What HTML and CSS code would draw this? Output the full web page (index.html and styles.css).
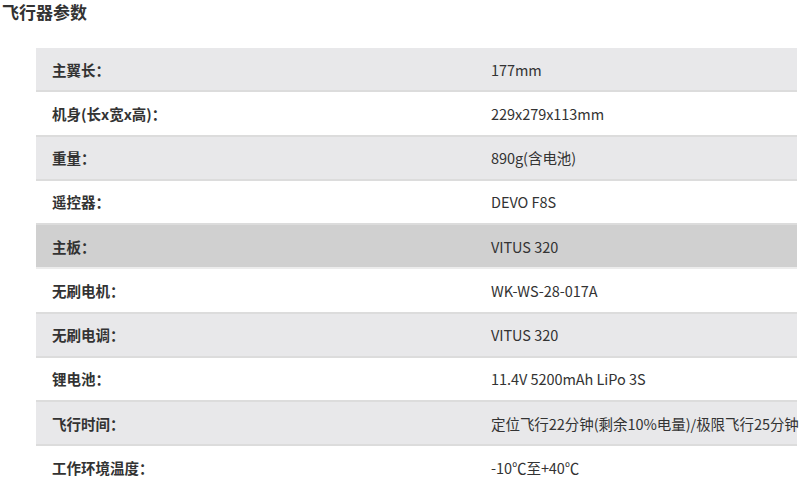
FILE: index.html
```html
<!DOCTYPE html>
<html lang="zh-CN">
<head>
<meta charset="utf-8">
<link rel="stylesheet" href="styles.css">
</head>
<body>
<h2 class="title">飞行器参数</h2>
<div class="spec">
  <div class="row alt"><div class="k">主翼长：</div><div class="v">177mm</div></div>
  <div class="row"><div class="k">机身(长x宽x高)：</div><div class="v">229x279x113mm</div></div>
  <div class="row alt"><div class="k">重量：</div><div class="v">890g(含电池)</div></div>
  <div class="row"><div class="k">遥控器：</div><div class="v">DEVO F8S</div></div>
  <div class="row hover"><div class="k">主板：</div><div class="v">VITUS 320</div></div>
  <div class="row"><div class="k">无刷电机：</div><div class="v">WK-WS-28-017A</div></div>
  <div class="row alt"><div class="k">无刷电调：</div><div class="v">VITUS 320</div></div>
  <div class="row"><div class="k">锂电池：</div><div class="v">11.4V 5200mAh LiPo 3S</div></div>
  <div class="row alt"><div class="k">飞行时间：</div><div class="v">定位飞行22分钟(剩余10%电量)/极限飞行25分钟</div></div>
  <div class="row last"><div class="k">工作环境温度：</div><div class="v">-10℃至+40℃</div></div>
</div>
</body>
</html>
```
FILE: styles.css
```css
html, body {
  margin: 0;
  padding: 0;
  background: #fff;
  overflow: hidden;
}
body {
  font-family: "Noto Sans CJK SC", "Noto Sans", sans-serif;
  color: #333;
}
.title {
  margin: 0;
  padding: 1px 0 0 2px;
  font-size: 17px;
  font-weight: bold;
  line-height: 21px;
  color: #333;
}
.spec {
  margin: 26px 0 0 36px;
  width: 761px;
}
.row {
  display: grid;
  grid-template-columns: 455px 1fr;
  height: 42.25px;
  align-items: center;
  border-bottom: 2px solid #dcdcdc;
  font-size: 14.5px;
  white-space: nowrap;
}
.row.alt {
  background: #e8e8ea;
}
.row.hover {
  background: #d0d0d0;
  border-bottom-color: #ececec;
}
.row.last {
  border-bottom: none;
}
.k {
  padding-left: 16px;
  font-weight: bold;
}
.v {
  padding-left: 0;
  letter-spacing: -0.05px;
}
```
